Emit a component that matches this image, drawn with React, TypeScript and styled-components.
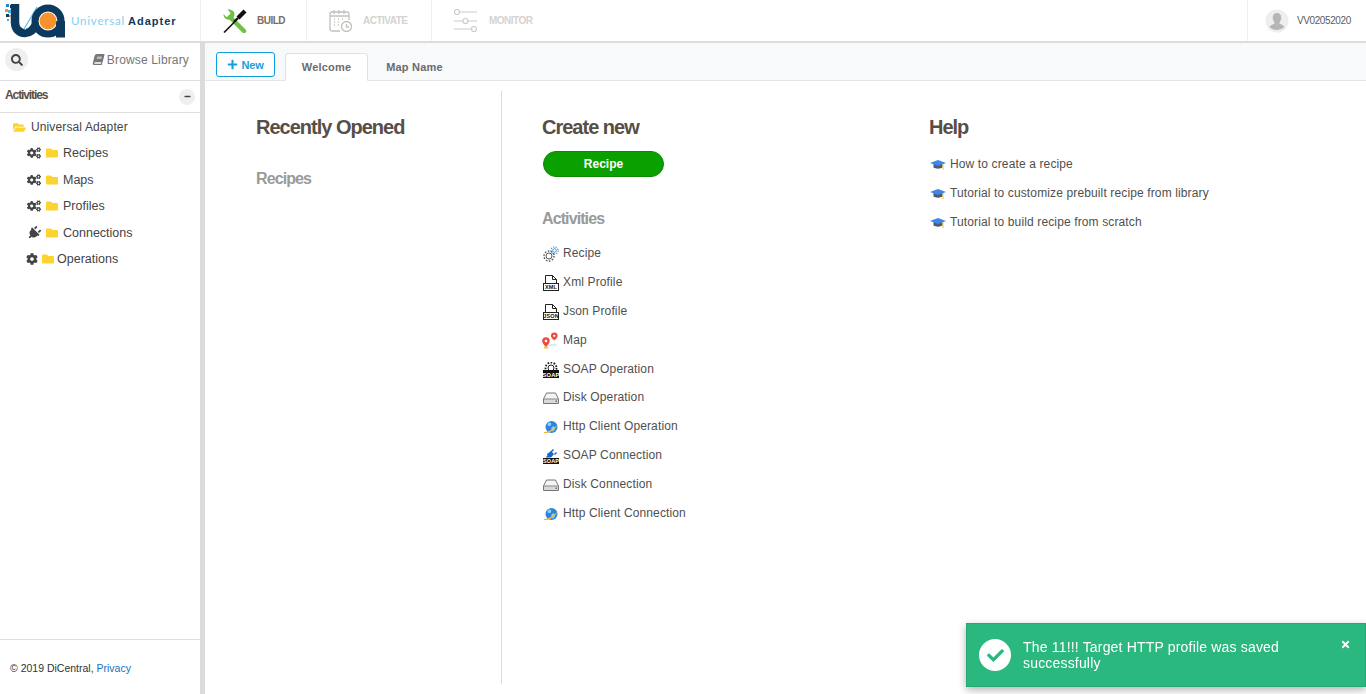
import React from 'react';
import styled, { createGlobalStyle } from 'styled-components';
import {
  FaBook,
  FaCheck,
  FaCog,
  FaCogs,
  FaFolder,
  FaFolderOpen,
  FaMinus,
  FaPlug,
  FaPlus,
  FaSearch,
  FaTimes,
} from 'react-icons/fa';

const GlobalStyle = createGlobalStyle`
  html, body {
    margin: 0;
    height: 100%;
    background: #fff;
    overflow: hidden;
    font-family: "Liberation Sans", Arial, sans-serif;
    color: #4a4a4a;
  }
`;

const LogoMark = () => (
  <svg width="62" height="36" viewBox="0 0 62 36">
    <path d="M12 1v18c0 7 4 11 10 11 6 0 9-4 11-9l6-14" fill="none" stroke="#0c3a5e" strokeWidth="8.5" />
    <path d="M21 26L34 4" fill="none" stroke="#fff" strokeWidth="3" />
    <path d="M21 26L34 4" fill="none" stroke="#5bbfe8" strokeWidth="1.2" />
    <circle cx="45" cy="18" r="13" fill="#fff" stroke="#0c3a5e" strokeWidth="7" />
    <rect x="53" y="18" width="9" height="16.5" fill="#0c3a5e" />
    <circle cx="45" cy="18" r="8.5" fill="#f7932d" />
    <rect x="3" y="1" width="3" height="3" fill="#2d86c4" />
    <rect x="7" y="2" width="3" height="3" fill="#0c3a5e" />
    <rect x="2" y="6" width="3" height="3" fill="#f7932d" />
    <rect x="5" y="7" width="3" height="3" fill="#4ab0e0" />
    <rect x="3" y="11" width="3" height="3" fill="#0c3a5e" />
    <rect x="6" y="12" width="2" height="2" fill="#f7932d" />
    <rect x="4" y="16" width="2" height="2" fill="#4ab0e0" />
  </svg>
);

const BuildIcon = () => (
  <svg width="24" height="24" viewBox="0 0 24 24">
    <path d="M7 8l14 14" stroke="#6fc043" strokeWidth="4.5" strokeLinecap="round" />
    <path d="M0.5 5l3 3 3-1 1-3-3-3.5c3-.5 7 1 7 4.5 0 2-1 4-3 5-3 1.5-8 .5-8-5z" fill="#6fc043" />
    <path d="M1 23.5l10.5-10.5" stroke="#111" strokeWidth="1.6" />
    <path d="M15 9l7-7" stroke="#111" strokeWidth="4.2" />
    <path d="M11 13l4-4" stroke="#111" strokeWidth="2.4" />
  </svg>
);

const ActivateIcon = () => (
  <svg width="24" height="24" viewBox="0 0 24 24" fill="none" stroke="#c4c1bd" strokeWidth="1.3">
    <path d="M11 22H3a2 2 0 0 1-2-2V5a2 2 0 0 1 2-2h15a2 2 0 0 1 2 2v6" />
    <path d="M5 1v4M10 1v4M15 1v4M1 7h19" />
    <path d="M5 10h1M9 10h1M13 10h1M5 13h1M9 13h1M5 16h1M9 16h1" />
    <circle cx="17.5" cy="17.5" r="5" />
    <path d="M17.5 15v3h2.5" />
  </svg>
);

const MonitorIcon = () => (
  <svg width="24" height="24" viewBox="0 0 24 24" fill="none" stroke="#cfccc8" strokeWidth="1.2">
    <path d="M6 3h17M0 12h9M14 12h9M0 20h17" />
    <circle cx="3" cy="3" r="2.5" />
    <circle cx="11.5" cy="12" r="2.5" />
    <circle cx="20" cy="20" r="2.5" />
  </svg>
);

const RecipeIcon = () => (
  <svg width="16" height="16" viewBox="0 0 16 16" fill="none">
    <circle cx="6" cy="10" r="3" stroke="#555" strokeWidth="1" />
    <circle cx="6" cy="10" r="5" stroke="#555" strokeWidth="1.4" strokeDasharray="1.6 1.5" />
    <circle cx="11.5" cy="4.5" r="1.8" stroke="#4a94cf" strokeWidth="1" />
    <circle cx="11.5" cy="4.5" r="3.6" stroke="#4a94cf" strokeWidth="1.2" strokeDasharray="1.3 1.2" />
  </svg>
);

const FileTagIcon = ({ label }: { label: string }) => (
  <svg width="16" height="16" viewBox="0 0 16 16">
    <path d="M2.5 9V.5h7l4 4V9M9.5.5v4h4" fill="#fff" stroke="#222" strokeWidth="1" />
    <rect x="0" y="8" width="16" height="8" fill="#222" />
    <rect x="1" y="9" width="14" height="6" fill="#fff" />
    <text x="8" y="14" fontSize="5.5" fontWeight="700" textAnchor="middle" fill="#111" fontFamily="Liberation Sans">
      {label}
    </text>
  </svg>
);

const MapIcon = () => (
  <svg width="18" height="17" viewBox="0 0 18 17">
    <path d="M7 13c3-1 9-2 9 0s-7 2-9 1z" fill="#dcebf7" />
    <path d="M13 0a3.5 3.5 0 0 1 3.500 3.5c0 2.500-3.500 5-3.500 5s-3.500-2.500-3.500-5A3.500 3.500 0 0 1 13 0z" fill="#f04a3e" />
    <circle cx="13" cy="3.5" r="1.2" fill="#fff" />
    <path d="M4.200 5a4 4 0 0 1 4 4c0 2.500-4 6.500-4 6.500s-4-4-4-6.500a4 4 0 0 1 4-4z" fill="#f04a3e" />
    <circle cx="4.200" cy="9" r="1.400" fill="#fff" />
    <rect x="2" y="15" width="4.500" height="2" fill="#f7c531" />
  </svg>
);

const SoapGearIcon = () => (
  <svg width="16" height="16" viewBox="0 0 16 16">
    <circle cx="8" cy="6" r="3" fill="none" stroke="#222" strokeWidth="1" />
    <circle cx="8" cy="6" r="5.5" fill="none" stroke="#222" strokeWidth="1.8" strokeDasharray="1.7 1.4" />
    <rect x="0" y="8" width="16" height="8" fill="#111" />
    <text x="8" y="14.5" fontSize="5.8" fontWeight="700" textAnchor="middle" fill="#fff" fontFamily="Liberation Sans">
      SOAP
    </text>
  </svg>
);

const DiskIcon = () => (
  <svg width="16" height="16" viewBox="0 0 16 16">
    <path d="M3.5 3h9L15.5 9v4.5h-15V9z" fill="#f4f4f4" stroke="#777" strokeWidth="1" />
    <path d="M1 9h14v4H1z" fill="#d9d9d9" />
    <path d="M.5 9h15" stroke="#888" strokeWidth="1" />
    <rect x="12.5" y="10.5" width="1.5" height="1.5" fill="#666" />
  </svg>
);

const GlobeIcon = () => (
  <svg width="16" height="16" viewBox="0 0 16 16">
    <circle cx="8.5" cy="8" r="6" fill="#2b85de" />
    <path d="M5 4c2-1 4 0 3 2S5 7 4.5 6zM9 8c2-1 4 0 3 2s-2 3-3 2-1-3 0-4z" fill="#8fd0f5" />
    <path d="M1 13c4 0 10-3 14-8-3 6-9 10-14 9z" fill="#f5b33d" />
  </svg>
);

const SoapPlugIcon = () => (
  <svg width="16" height="16" viewBox="0 0 16 16">
    <path d="M4 6l4-3 3 3-3 3.5H5zM8 3l2-2 1 1-2 2zM11 6l2-2 1 1-2 2z" fill="#1668c9" />
    <path d="M3 9l2-2 1 1-2 2z" fill="#1668c9" />
    <rect x="0" y="10" width="16" height="6" fill="#111" />
    <text x="8" y="15" fontSize="5.5" fontWeight="700" textAnchor="middle" fill="#fff" fontFamily="Liberation Sans">
      SOAP
    </text>
  </svg>
);

const HatIcon = () => (
  <svg width="16" height="12" viewBox="0 0 16 12">
    <path d="M3.5 5v3.500c2 1.500 7 1.500 9 0V5z" fill="#4f5a6b" />
    <path d="M0 4l8-3 8 3-8 3z" fill="#3f86ea" />
    <rect x="12.5" y="5" width="1" height="6" fill="#f5c531" />
  </svg>
);

const AvatarIcon = () => (
  <svg width="24" height="24" viewBox="0 0 24 24">
    <circle cx="12" cy="12" r="11.5" fill="#eeeeee" />
    <path d="M12 4c3 0 4.500 2.500 4.200 5.300-.2 2-1 3.300-1.700 4.100v1.300c2 .8 4.300 1.500 5 3.300a11 11 0 0 1-15 0c.7-1.800 3-2.500 5-3.300v-1.300c-.7-.8-1.500-2.100-1.700-4.100C7.500 6.500 9 4 12 4z" fill="#b5b5b5" />
  </svg>
);

const createItems: { label: string; icon: React.ReactNode }[] = [
  { label: 'Recipe', icon: <RecipeIcon /> },
  { label: 'Xml Profile', icon: <FileTagIcon label="XML" /> },
  { label: 'Json Profile', icon: <FileTagIcon label="JSON" /> },
  { label: 'Map', icon: <MapIcon /> },
  { label: 'SOAP Operation', icon: <SoapGearIcon /> },
  { label: 'Disk Operation', icon: <DiskIcon /> },
  { label: 'Http Client Operation', icon: <GlobeIcon /> },
  { label: 'SOAP Connection', icon: <SoapPlugIcon /> },
  { label: 'Disk Connection', icon: <DiskIcon /> },
  { label: 'Http Client Connection', icon: <GlobeIcon /> },
];

const helpItems = [
  'How to create a recipe',
  'Tutorial to customize prebuilt recipe from library',
  'Tutorial to build recipe from scratch',
];

const App: React.FC = () => (
  <Page>
    <GlobalStyle />
    <Header>
      <Brand>
        <LogoMark />
        <BrandLight>Universal</BrandLight>
        <BrandBold>Adapter</BrandBold>
      </Brand>
      <NavItem $width={106} $gap={10}>
        <BuildIcon />
        <NavLabel $active>BUILD</NavLabel>
      </NavItem>
      <NavItem $width={125} $gap={10}>
        <ActivateIcon />
        <NavLabel>ACTIVATE</NavLabel>
      </NavItem>
      <NavItem $width={120} $gap={11} $last>
        <MonitorIcon />
        <NavLabel>MONITOR</NavLabel>
      </NavItem>
      <UserBox>
        <AvatarIcon />
        <UserName>VV02052020</UserName>
      </UserBox>
    </Header>
    <Body>
      <Sidebar>
        <SideTop>
          <RoundButton $size={23}>
            <FaSearch size={12} />
          </RoundButton>
          <BrowseLink>
            <BookGlyph><FaBook size={11} /></BookGlyph>
            Browse Library
          </BrowseLink>
        </SideTop>
        <ActivitiesBar>
          <ActivitiesLabel>Activities</ActivitiesLabel>
          <RoundButton $size={16}>
            <FaMinus size={7} />
          </RoundButton>
        </ActivitiesBar>
        <Tree>
          <TreeRoot>
            <FaFolderOpen size={13} color="#fdd32f" />
            Universal Adapter
          </TreeRoot>
          <TreeRow>
            <TreeTypeIcon><FaCogs size={16} /></TreeTypeIcon>
            <FaFolder size={12} color="#fdd32f" />
            Recipes
          </TreeRow>
          <TreeRow>
            <TreeTypeIcon><FaCogs size={16} /></TreeTypeIcon>
            <FaFolder size={12} color="#fdd32f" />
            Maps
          </TreeRow>
          <TreeRow>
            <TreeTypeIcon><FaCogs size={16} /></TreeTypeIcon>
            <FaFolder size={12} color="#fdd32f" />
            Profiles
          </TreeRow>
          <TreeRow>
            <TreeTypeIcon $tilt><FaPlug size={14} /></TreeTypeIcon>
            <FaFolder size={12} color="#fdd32f" />
            Connections
          </TreeRow>
          <TreeRow $shifted>
            <TreeTypeIcon $narrow><FaCog size={12} /></TreeTypeIcon>
            <FaFolder size={12} color="#fdd32f" />
            Operations
          </TreeRow>
        </Tree>
        <SideFooter>
          © 2019 DiCentral, <FooterLink>Privacy</FooterLink>
        </SideFooter>
      </Sidebar>
      <Splitter />
      <Main>
        <TabBar>
          <NewButton>
            <FaPlus size={11} />
            New
          </NewButton>
          <Tab $active>Welcome</Tab>
          <Tab>Map Name</Tab>
        </TabBar>
        <Content>
          <RecentColumn>
            <Heading>Recently Opened</Heading>
            <SubHeading $top={30}>Recipes</SubHeading>
          </RecentColumn>
          <CreateColumn>
            <Heading>Create new</Heading>
            <RecipeButton>Recipe</RecipeButton>
            <SubHeading $top={32}>Activities</SubHeading>
            <LinkList>
              {createItems.map((item) => (
                <LinkRow key={item.label}>
                  <LinkIcon>{item.icon}</LinkIcon>
                  {item.label}
                </LinkRow>
              ))}
            </LinkList>
          </CreateColumn>
          <HelpColumn>
            <Heading>Help</Heading>
            <HelpList>
              {helpItems.map((item) => (
                <LinkRow key={item}>
                  <LinkIcon>
                    <HatIcon />
                  </LinkIcon>
                  {item}
                </LinkRow>
              ))}
            </HelpList>
          </HelpColumn>
        </Content>
      </Main>
    </Body>
    <Toast>
      <ToastBadge>
        <FaCheck size={17} />
      </ToastBadge>
      <ToastText>The 11!!! Target HTTP profile was saved successfully</ToastText>
      <ToastClose>
        <FaTimes size={11} />
      </ToastClose>
    </Toast>
  </Page>
);

const Page = styled.div`
  display: flex;
  flex-direction: column;
  width: 1366px;
  height: 694px;
  overflow: hidden;
`;

const Header = styled.header`
  display: flex;
  align-items: stretch;
  flex: none;
  height: 41px;
  border-bottom: 2px solid #dcdcdc;
`;

const Brand = styled.div`
  display: flex;
  align-items: center;
  flex: none;
  box-sizing: border-box;
  width: 201px;
  padding-left: 3px;
  border-right: 1px solid #f1eeeb;
  white-space: nowrap;
`;

const BrandLight = styled.span`
  margin-left: 6px;
  font-family: Lato, "Liberation Sans", sans-serif;
  font-size: 11.5px;
  font-weight: 400;
  letter-spacing: 0.8px;
  color: #7fd0f2;
`;

const BrandBold = styled.span`
  margin-left: 3px;
  font-size: 11px;
  font-weight: 700;
  letter-spacing: 1px;
  color: #0c3a5e;
`;

const NavItem = styled.div<{ $width: number; $gap: number; $last?: boolean }>`
  display: flex;
  align-items: center;
  flex: none;
  gap: ${(p) => p.$gap}px;
  box-sizing: border-box;
  width: ${(p) => p.$width}px;
  padding-left: 22px;
  border-right: ${(p) => (p.$last ? 'none' : '1px solid #f1eeeb')};
`;

const NavLabel = styled.span<{ $active?: boolean }>`
  font-size: 10px;
  font-weight: 700;
  letter-spacing: -0.5px;
  color: ${(p) => (p.$active ? '#7d6e60' : '#d6d3cf')};
`;

const UserBox = styled.div`
  display: flex;
  align-items: center;
  gap: 8px;
  margin-left: auto;
  box-sizing: border-box;
  width: 119px;
  padding-left: 17px;
  border-left: 1px solid #f1eeeb;
`;

const UserName = styled.span`
  font-size: 10px;
  letter-spacing: -0.4px;
  color: #5c5c5c;
`;

const Body = styled.div`
  display: flex;
  flex: 1;
  min-height: 0;
`;

const Sidebar = styled.aside`
  display: flex;
  flex-direction: column;
  flex: none;
  width: 200px;
`;

const SideTop = styled.div`
  display: flex;
  align-items: center;
  justify-content: space-between;
  flex: none;
  height: 33px;
  padding: 0 11px 4px 5px;
  border-bottom: 1px solid #dedede;
`;

const RoundButton = styled.span<{ $size: number }>`
  display: inline-flex;
  align-items: center;
  justify-content: center;
  width: ${(p) => p.$size}px;
  height: ${(p) => p.$size}px;
  border-radius: 50%;
  background: #efefef;
  color: #444;
`;

const BrowseLink = styled.span`
  display: flex;
  align-items: center;
  gap: 3px;
  font-size: 12px;
  letter-spacing: 0.15px;
  color: #777;
`;

const BookGlyph = styled.span`
  display: inline-flex;
  transform: skewX(-14deg);
`;

const ActivitiesBar = styled.div`
  display: flex;
  align-items: center;
  justify-content: space-between;
  flex: none;
  height: 31px;
  padding: 0 5px;
  border-bottom: 1px solid #dedede;
`;

const ActivitiesLabel = styled.span`
  padding-bottom: 3px;
  font-size: 12px;
  font-weight: 700;
  letter-spacing: -1.1px;
  color: #5a4f46;
`;

const Tree = styled.div`
  display: flex;
  flex-direction: column;
  flex: 1;
  padding-top: 1px;
  font-size: 12.5px;
  color: #444;
`;

const TreeRoot = styled.div`
  display: flex;
  align-items: center;
  gap: 5px;
  height: 26px;
  padding-left: 13px;
  font-size: 12px;
  letter-spacing: 0.12px;
`;

const TreeRow = styled.div<{ $shifted?: boolean }>`
  display: flex;
  align-items: center;
  gap: ${(p) => (p.$shifted ? 3.5 : 5)}px;
  height: 26.5px;
  padding-left: ${(p) => (p.$shifted ? 26 : 27)}px;
`;

const TreeTypeIcon = styled.span<{ $narrow?: boolean; $tilt?: boolean }>`
  display: inline-flex;
  justify-content: center;
  width: ${(p) => (p.$narrow ? 12 : 14)}px;
  color: #444;
  transform: ${(p) => (p.$tilt ? 'rotate(45deg)' : 'none')};
`;

const SideFooter = styled.div`
  flex: none;
  height: 55px;
  padding: 22px 0 0 10px;
  box-sizing: border-box;
  border-top: 1px solid #dedede;
  font-size: 10.5px;
  color: #333;
`;

const FooterLink = styled.span`
  color: #1a6fb5;
`;

const Splitter = styled.div`
  flex: none;
  width: 5px;
  background: #dcdcdc;
`;

const Main = styled.main`
  display: flex;
  flex-direction: column;
  flex: 1;
  min-width: 0;
`;

const TabBar = styled.div`
  display: flex;
  align-items: flex-end;
  flex: none;
  height: 37px;
  padding-left: 11px;
  background: #f7f9fb;
  border-bottom: 1px solid #e6e6e6;
`;

const NewButton = styled.span`
  display: flex;
  align-items: center;
  justify-content: center;
  gap: 3px;
  align-self: flex-start;
  box-sizing: border-box;
  width: 59px;
  height: 25px;
  margin: 9px 10px 0 0;
  background: #fff;
  border: 1px solid #11a0dc;
  border-radius: 3px;
  font-size: 11px;
  font-weight: 700;
  letter-spacing: -0.2px;
  color: #159fdc;
`;

const Tab = styled.span<{ $active?: boolean }>`
  display: flex;
  align-items: center;
  justify-content: center;
  box-sizing: border-box;
  width: ${(p) => (p.$active ? 83 : 93)}px;
  height: 28px;
  margin-bottom: -1px;
  background: ${(p) => (p.$active ? '#fff' : 'transparent')};
  border: ${(p) => (p.$active ? '1px solid #e0e0e0' : '1px solid transparent')};
  border-bottom: ${(p) => (p.$active ? '1px solid #fff' : '1px solid transparent')};
  border-radius: 4px 4px 0 0;
  font-size: 11px;
  font-weight: 700;
  letter-spacing: 0.2px;
  color: #6b6b6b;
`;

const Content = styled.div`
  display: flex;
  flex: 1;
  min-height: 0;
  padding: 10px 0;
`;

const RecentColumn = styled.section`
  flex: none;
  box-sizing: border-box;
  width: 297px;
  padding: 24px 0 0 51px;
  border-right: 1px solid #dcdcdc;
`;

const CreateColumn = styled.section`
  flex: none;
  box-sizing: border-box;
  width: 427px;
  padding: 24px 0 0 40px;
`;

const HelpColumn = styled.section`
  flex: 1;
  padding-top: 24px;
`;

const Heading = styled.h2`
  margin: 0;
  font-size: 20px;
  line-height: 24px;
  font-weight: 700;
  letter-spacing: -1px;
  color: #574e46;
`;

const SubHeading = styled.h3<{ $top: number }>`
  margin: ${(p) => p.$top}px 0 0;
  font-size: 16px;
  line-height: 20px;
  font-weight: 700;
  letter-spacing: -0.9px;
  color: #9a9a9a;
`;

const RecipeButton = styled.div`
  display: flex;
  align-items: center;
  justify-content: center;
  box-sizing: border-box;
  width: 121px;
  height: 26px;
  margin: 12px 0 0 1px;
  background: #0aa000;
  border: 1px solid #078a00;
  border-radius: 13px;
  font-size: 12px;
  font-weight: 700;
  color: #fff;
`;

const LinkList = styled.div`
  display: flex;
  flex-direction: column;
  gap: 6.9px;
  margin-top: 13px;
`;

const HelpList = styled(LinkList)`
  margin-top: 14px;
`;

const LinkRow = styled.div`
  display: flex;
  align-items: center;
  gap: 4px;
  height: 22px;
  font-size: 12px;
  letter-spacing: 0.13px;
  color: #4f4f4f;
  white-space: nowrap;
`;

const LinkIcon = styled.span`
  display: inline-flex;
  justify-content: center;
  width: 17px;
  margin-top: 2px;
`;

const Toast = styled.div`
  position: fixed;
  right: 0;
  bottom: 7px;
  display: flex;
  box-sizing: border-box;
  width: 400px;
  height: 64px;
  padding: 15px 14px 0 12px;
  background: #2ab87f;
  border: 1px solid #25a873;
  box-shadow: 0 3px 8px rgba(0, 0, 0, 0.3);
  color: #fff;
`;

const ToastBadge = styled.span`
  display: flex;
  align-items: center;
  justify-content: center;
  flex: none;
  width: 32px;
  height: 32px;
  background: #fff;
  border-radius: 50%;
  color: #2ab87f;
`;

const ToastText = styled.div`
  flex: 1;
  margin-left: 12px;
  font-size: 14px;
  line-height: 16px;
  letter-spacing: 0.18px;
`;

const ToastClose = styled.span`
  display: flex;
  flex: none;
  height: 11px;
  margin-left: 12px;
`;

export default App;
